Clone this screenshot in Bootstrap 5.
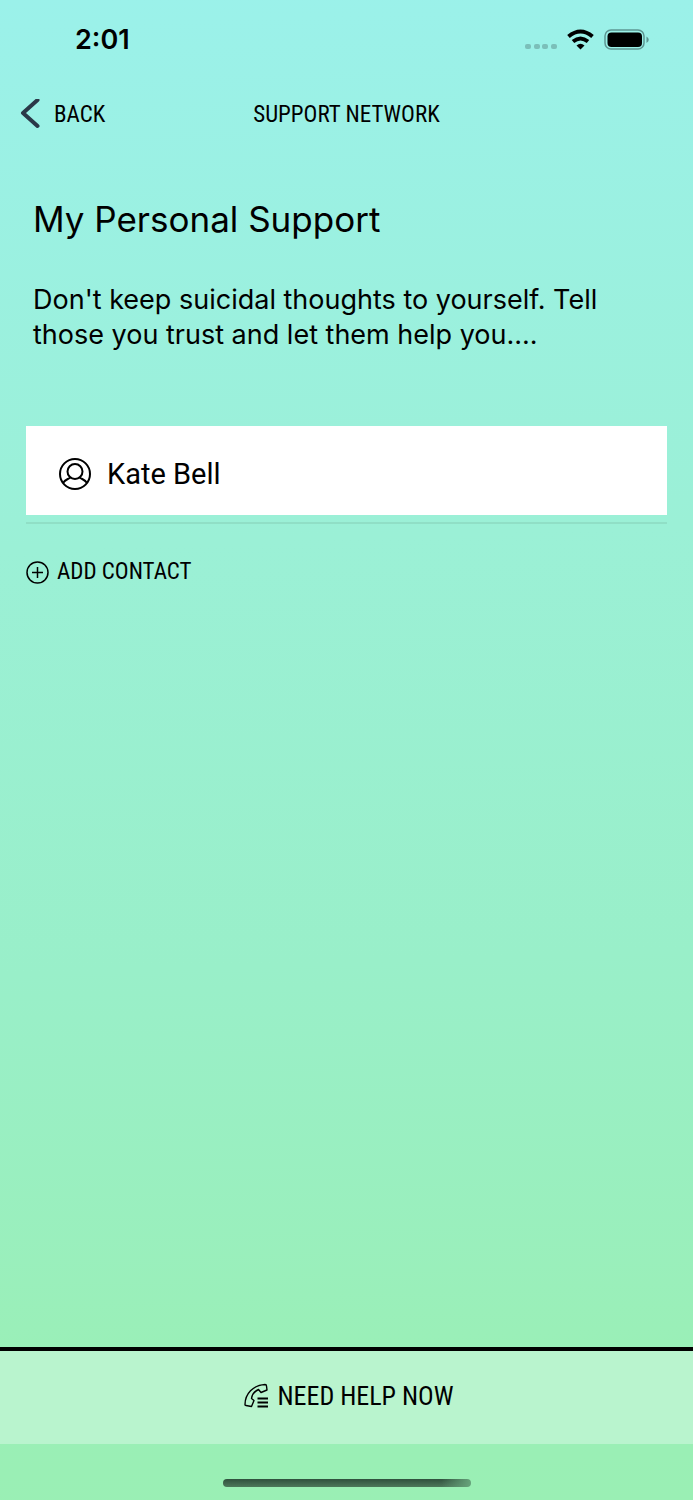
<!DOCTYPE html>
<html lang="en">
<head>
<meta charset="utf-8">
<meta name="viewport" content="width=device-width, initial-scale=1">
<title>Support Network</title>
<link href="https://cdn.jsdelivr.net/npm/bootstrap@5.3.0/dist/css/bootstrap.min.css" rel="stylesheet">
<style>
  body { font-family: Inter, "Liberation Sans", sans-serif; color: #000; background: linear-gradient(178deg, #9bf1ea 0%, #9bf0d6 36%, #99efc9 64%, #9aefb7 90%, #9aefb4 100%); }
  svg { display: block; flex: none; }
  .status-bar { height: 80px; padding: 0 44px 0 75px; }
  .clock { font-size: 27px; font-weight: 600; line-height: 32px; }
  .condensed { font-family: "Roboto Condensed", Roboto, sans-serif; font-size: 23px; font-weight: 400; line-height: 28px; }
  .top-nav { height: 68px; display: grid; grid-template-columns: 1fr auto 1fr; align-items: center; padding: 2px 20px 0; }
  .plain { color: #000; background: none; border: 0; padding: 0; text-decoration: none; }
  .back { gap: 14px; }
  .intro { padding: 47px 33px 0; }
  .intro h2 { font-size: 35px; line-height: 48px; font-weight: 400; margin: 0 0 39px; }
  .intro p { font-size: 27px; line-height: 35px; margin: 0; }
  .contacts { margin: 74px 26px 0; border-bottom: 2px solid #90dfc6; padding-bottom: 7px; }
  .contact { font-family: Roboto, sans-serif; font-size: 29px; line-height: 34px; height: 89px; padding: 6px 33px 0; gap: 16px; background: #fff; }
  .add { margin: 34px 26px 0; gap: 8px; }
  .help-bar { border-top: 4px solid #000; background: #b9f4ce; }
  .help { height: 93px; padding: 0 0 4px 5px; font-size: 26px; gap: 8px; }
  .home-area { height: 56px; padding-top: 35px; }
  .home-bar { width: 248px; height: 8px; border-radius: 4px; background: linear-gradient(90deg, transparent 88%, #67a37b 100%), linear-gradient(#30503d, #4d775a); }
</style>
</head>
<body class="d-flex flex-column min-vh-100">
<header>
  <div class="status-bar d-flex align-items-center justify-content-between">
    <span class="clock">2:01</span>
    <svg width="124" height="22" viewBox="0 0 124 22" role="img" aria-label="Wi-Fi on, battery full">
      <g fill="#7bbfb9"><rect x="0" y="15" width="6" height="5" rx="2"/><rect x="9" y="15" width="6" height="5" rx="2"/><rect x="17" y="15" width="6" height="5" rx="2"/><rect x="26" y="15" width="6" height="5" rx="2"/></g>
      <g fill="none" stroke="#000" stroke-width="4"><path d="M43.500 7.500Q55.500-2.500 67.500 7.500M48 12.500Q55.500 6.500 63 12.500"/></g>
      <path d="M51.500 16.500Q55.500 13 59.500 16.500L55.500 20.500Z"/>
      <rect x="80" y="1" width="39" height="19" rx="6" fill="none" stroke="#5d9692" stroke-width="1.500"/>
      <rect x="82.500" y="3.500" width="34.500" height="14.500" rx="4"/>
      <path d="M121.500 7.500Q126 10.500 121.500 14Z" fill="#5d9692"/>
    </svg>
  </div>
  <nav class="top-nav condensed" aria-label="Main">
    <a href="#" class="back plain d-flex align-items-center"><svg width="20" height="32" viewBox="0 0 20 32" fill="none" stroke="#2b3848" stroke-width="4" stroke-linecap="round" stroke-linejoin="round"><path d="M17.500 1L3 14L17.500 27"/></svg>BACK</a>
    <h1 class="condensed m-0">SUPPORT NETWORK</h1>
  </nav>
</header>
<main class="flex-grow-1">
  <section class="intro">
    <h2>My Personal Support</h2>
    <p>Don't keep suicidal thoughts to yourself. Tell those you trust and let them help you....</p>
  </section>
  <div class="contacts">
    <a href="#" class="contact plain d-flex align-items-center">
      <svg width="32" height="32" viewBox="0 0 32 32" fill="none" stroke="#000" stroke-width="2"><circle cx="16" cy="16" r="15"/><circle cx="16" cy="13.500" r="7.500"/><path d="M4 25C6 21.500 8.500 21.500 11.500 19.500M28 25C26 21.500 23.500 21.500 20.500 19.500"/></svg>
      Kate Bell</a>
  </div>
  <button type="button" class="add plain condensed d-flex align-items-center">
    <svg width="23" height="23" viewBox="0 0 23 23" fill="none" stroke="#000" stroke-width="1.500"><circle cx="11.500" cy="11.500" r="10.500"/><path d="M6 11.500H17M11.500 6V17"/></svg>
    ADD CONTACT</button>
</main>
<footer>
  <div class="help-bar">
    <button type="button" class="help plain condensed w-100 d-flex align-items-center justify-content-center">
      <svg width="25" height="25" viewBox="0 0 25 25" fill="none" stroke="#000" stroke-width="1.400" stroke-linejoin="round"><path d="M1 21.500C1 11 9 2 21 1.500Q22.500 1.500 22.500 3L23 7L17 9.500L14.500 6.500C10 8.500 8 12 7.500 15.500L10 17.500L7.500 23.500L2 22.500Q1 22.500 1 21.500Z"/><path d="M13.500 15.500H24M13.500 19.500H24M13.500 23.500H24" stroke-width="1.800"/></svg>
      NEED HELP NOW</button>
  </div>
  <div class="home-area"><div class="home-bar mx-auto"></div></div>
</footer>
<script src="https://cdn.jsdelivr.net/npm/bootstrap@5.3.0/dist/js/bootstrap.bundle.min.js"></script>
</body>
</html>
